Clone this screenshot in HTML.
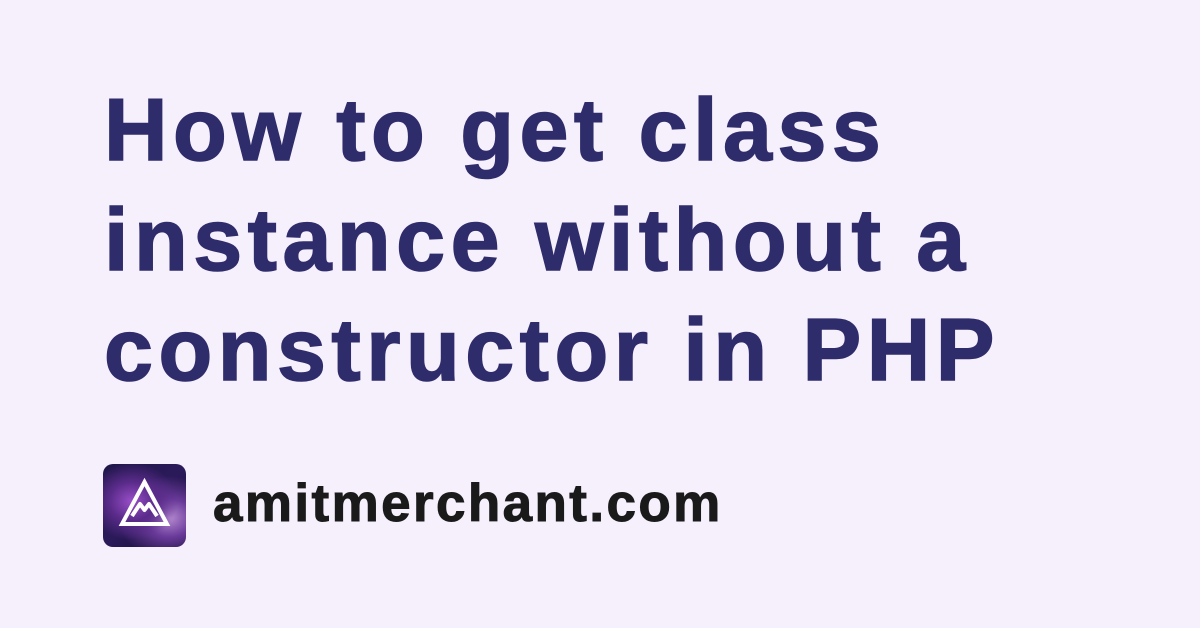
<!DOCTYPE html>
<html><head><meta charset="utf-8"><style>
html,body{margin:0;padding:0}
body{width:1200px;height:628px;background:#f6effc;position:relative;overflow:hidden;font-family:"Liberation Sans",sans-serif}
.t{position:absolute;left:104px;font-weight:bold;color:#2e2c6a;font-size:88px;letter-spacing:5.5px;white-space:nowrap;line-height:1;-webkit-text-stroke:1.5px #2e2c6a}
.d{position:absolute;left:213px;top:477px;font-weight:bold;color:#1a1a1a;font-size:53px;letter-spacing:2.4px;line-height:1;white-space:nowrap;-webkit-text-stroke:1px #1a1a1a}
.logo{position:absolute;left:103px;top:464px;width:83px;height:83px;border-radius:10px;overflow:hidden;
background:radial-gradient(ellipse at 35% 45%,#9a4fc8 0%,#5a2b8a 30%,transparent 60%),radial-gradient(ellipse at 80% 65%,#b68ad0 0%,#6a3a9a 25%,transparent 55%),linear-gradient(135deg,#1e1748,#2b1a5a 50%,#120c30)}
</style></head><body>
<div class="t" style="top:86px">How to get class</div>
<div class="t" style="top:196px">instance without a</div>
<div class="t" style="top:306px">constructor in PHP</div>
<div class="logo"><svg width="83" height="83" viewBox="0 0 83 83"><polygon points="41.5,18 64,60 19,60" fill="none" stroke="#fff" stroke-width="4"/><path d="M29,52 L37,40 L41.5,46 L46,40 L54,52" fill="none" stroke="#fff" stroke-width="4" stroke-linejoin="round"/></svg></div>
<div class="d">amitmerchant.com</div>
</body></html>
